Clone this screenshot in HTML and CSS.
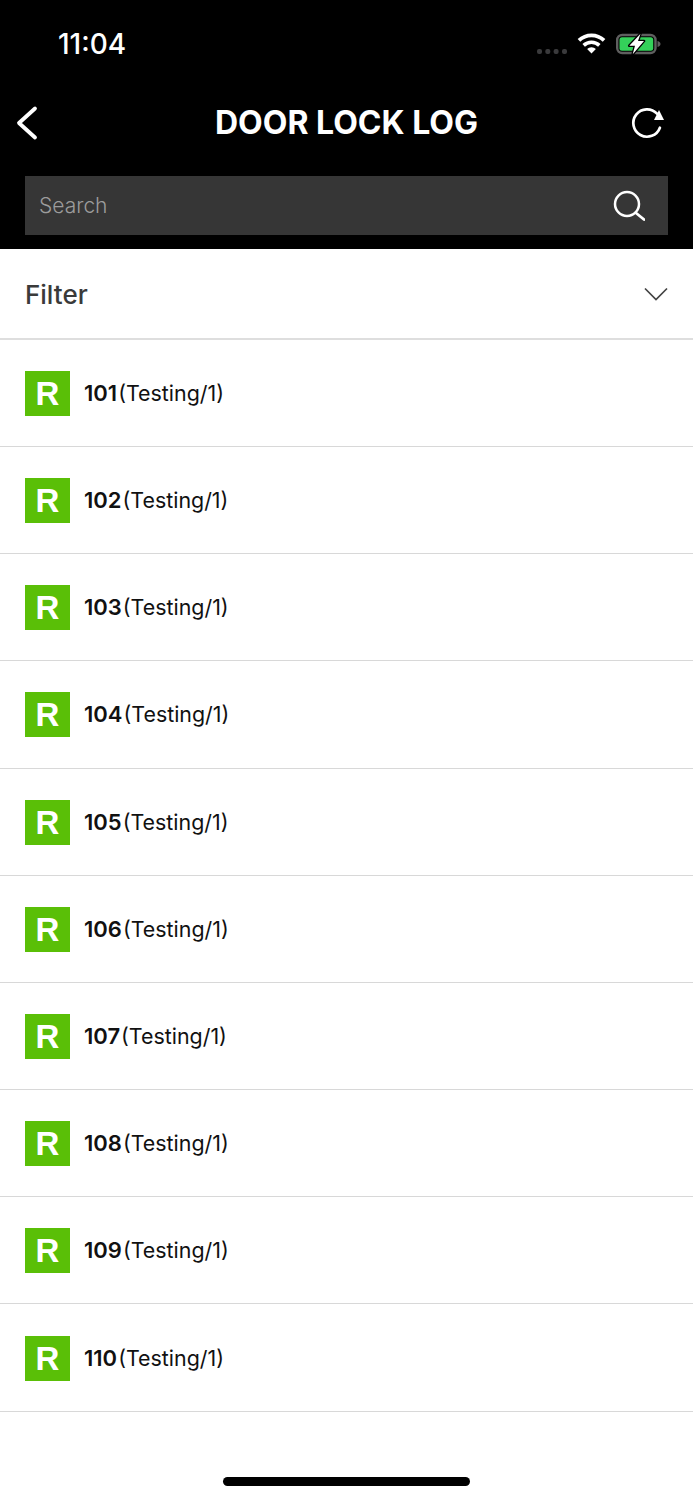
FILE: index.html
```html
<!DOCTYPE html>
<html lang="en">

<head>
    <meta charset="utf-8">
    <meta name="viewport" content="width=device-width, initial-scale=1.0">
    <title>Door Lock Log</title>
    <link rel="stylesheet" href="styles.css">
</head>

<body>

    <header class="top">
        <div class="status">
            <span class="time">11:04</span>
            <div class="status-icons">
                <svg class="signal" width="30" height="5" viewBox="0 0 30 5"><g fill="#3a3a3c"><rect x="0" y="0" width="5" height="5" rx="2"/><rect x="8.300" y="0" width="5" height="5" rx="2"/><rect x="16.600" y="0" width="5" height="5" rx="2"/><rect x="25" y="0" width="5" height="5" rx="2"/></g></svg>
                <svg class="wifi" width="29" height="21" viewBox="0 0 29 22"><path d="M14.500 21.500l-4.600-4.800a6.600 6.600 0 0 1 9.200 0zM7.600 14.300L5 11.600a13.600 13.600 0 0 1 19 0l-2.600 2.700a9.900 9.900 0 0 0-13.800 0zM2.700 9.200L0 6.400a20.800 20.800 0 0 1 29 0l-2.700 2.800a17 17 0 0 0-23.600 0z" fill="#fff"/></svg>
                <svg class="battery" width="45" height="22" viewBox="0 0 45 22"><rect x="1.200" y="2" width="38.300" height="18" rx="5" fill="none" stroke="#5f5f5f" stroke-width="2.400"/><rect x="3.500" y="4.300" width="33.700" height="13.400" rx="2.500" fill="#34d15a"/><path d="M41.500 8c2 .5 3 1.600 3 3s-1 2.500-3 3z" fill="#5f5f5f"/><path d="M24.500 .7L13.300 12.700H19L16.700 21.300 28 8H22z" fill="#fff" stroke="#000" stroke-width="2.600" stroke-linejoin="round" paint-order="stroke"/></svg>
            </div>
        </div>
        <div class="nav">
            <svg class="back" width="24" height="36" viewBox="0 0 24 36"><path d="M21 3.500L5 18l16 14.500" fill="none" stroke="#fff" stroke-width="3.800" stroke-linecap="round" stroke-linejoin="round"/></svg>
            <h1>DOOR LOCK LOG</h1>
            <svg class="reload" width="36" height="36" viewBox="0 0 36 36"><path d="M30.900 22.700A13.700 13.700 0 1 1 28 8.600" fill="none" stroke="#fff" stroke-width="2.700" stroke-linecap="round"/><path d="M30 5L35 15 25 15z" fill="#fff"/></svg>
        </div>
        <div class="search">
            <span>Search</span>
            <svg width="32" height="31" viewBox="0 0 32 31"><circle cx="14" cy="14" r="12" fill="none" stroke="#fff" stroke-width="2.500"/><path d="M23 23L31 29.500" fill="none" stroke="#fff" stroke-width="2.800" stroke-linecap="round"/></svg>
        </div>
    </header>

    <div class="filter">
        <span>Filter</span>
        <svg width="24" height="14" viewBox="0 0 24 14"><path d="M1 1.500L12 12.500 23 1.500" fill="none" stroke="#444" stroke-width="1.700"/></svg>
    </div>

    <section class="rooms">
        <article class="room"><b class="badge">R</b><p><b>101</b>(Testing/1)</p></article>
        <article class="room"><b class="badge">R</b><p><b>102</b>(Testing/1)</p></article>
        <article class="room"><b class="badge">R</b><p><b>103</b>(Testing/1)</p></article>
        <article class="room"><b class="badge">R</b><p><b>104</b>(Testing/1)</p></article>
        <article class="room"><b class="badge">R</b><p><b>105</b>(Testing/1)</p></article>
        <article class="room"><b class="badge">R</b><p><b>106</b>(Testing/1)</p></article>
        <article class="room"><b class="badge">R</b><p><b>107</b>(Testing/1)</p></article>
        <article class="room"><b class="badge">R</b><p><b>108</b>(Testing/1)</p></article>
        <article class="room"><b class="badge">R</b><p><b>109</b>(Testing/1)</p></article>
        <article class="room"><b class="badge">R</b><p><b>110</b>(Testing/1)</p></article>
    </section>

    <div class="home-bar"></div>

</body>

</html>
```

FILE: styles.css
```css
* {
    box-sizing: border-box;
}

html,
body {
    margin: 0;
    height: 1500px;
    overflow: hidden;
}

body {
    position: relative;
    background: #fff;
    font-family: Inter, "Noto Sans", sans-serif;
    color: #111;
}

.top {
    height: 249px;
    background: #000;
    color: #fff;
}

.status {
    height: 84px;
    padding: 26px 32px 0 58px;
    display: flex;
    justify-content: space-between;
}

.time {
    font-size: 28px;
    line-height: 36px;
    font-weight: 500;
}

.status-icons {
    display: flex;
    align-items: flex-start;
    gap: 10px;
    margin-top: 7px;
}

.signal {
    margin-top: 16px;
}

.nav {
    height: 76px;
    padding: 0 14px;
    display: grid;
    grid-template-columns: 1fr auto 1fr;
    align-items: center;
}

.reload {
    justify-self: end;
    margin-right: 14px;
}

.nav h1 {
    margin: 0;
    padding-top: 1px;
    font-size: 32px;
    font-weight: 700;
    line-height: 76px;
}

.search {
    height: 59px;
    margin: 16px 25px 0;
    padding: 0 23px 0 14px;
    background: #363636;
    display: flex;
    align-items: center;
    justify-content: space-between;
    font-size: 21px;
    font-weight: 300;
    color: #9c9c9c;
}

.filter {
    height: 90.8px;
    padding: 2px 25px 0;
    border-bottom: 2px solid #dedede;
    display: flex;
    align-items: center;
    justify-content: space-between;
    font-size: 26px;
    font-weight: 500;
    color: #3a3a3a;
}

.room {
    height: 107.2px;
    padding-left: 25px;
    border-bottom: 1px solid #d8d8d8;
    display: flex;
    align-items: center;
    gap: 14px;
}

.room p {
    margin: 0;
    font-size: 21.4px;
}

.room p b {
    margin-right: 1px;
    font-size: 22px;
    font-weight: 600;
}

.badge {
    width: 45px;
    height: 45px;
    margin-top: 1px;
    padding-top: 1px;
    background: #5abf07;
    color: #fff;
    font-family: "Liberation Sans", sans-serif;
    font-size: 33px;
    font-weight: 700;
    display: flex;
    align-items: center;
    justify-content: center;
}

.home-bar {
    position: absolute;
    left: 223px;
    top: 1477px;
    width: 247px;
    height: 9px;
    border-radius: 5px;
    background: #000;
}
```
